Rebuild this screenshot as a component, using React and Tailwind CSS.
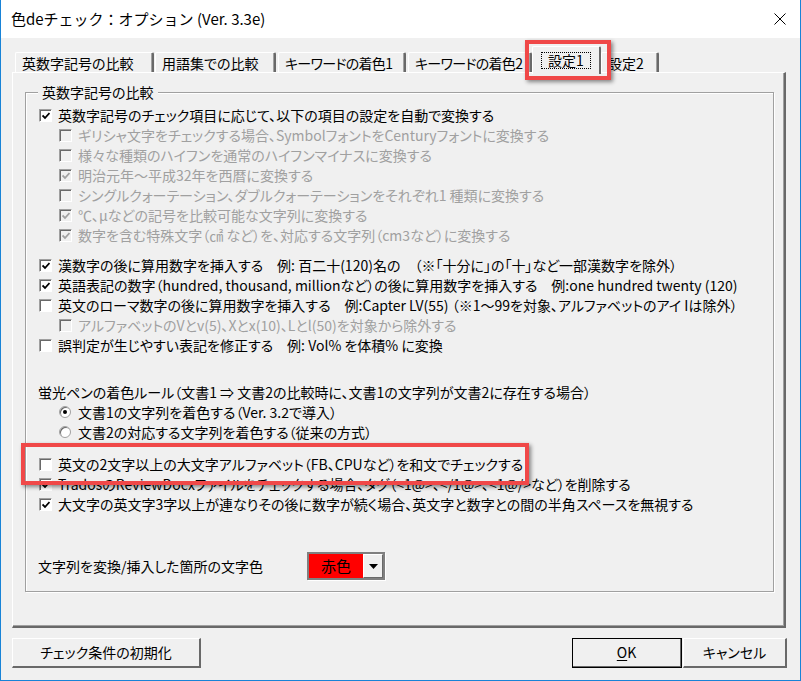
import React from 'react';

const FONT = "font-['Noto_Sans_CJK_JP','Noto_Sans',sans-serif] [font-feature-settings:'palt']";

// classic 3D checkbox
function Box({ checked, disabled }) {
  return (
    <span
      className={`relative inline-block h-[13px] w-[13px] shrink-0 border-t border-l border-[#a0a0a0] border-r-white border-b-white border-r border-b shadow-[inset_1px_1px_0_#696969] ${
        disabled ? 'bg-[#f0f0f0]' : 'bg-white'
      }`}
    >
      {checked && (
        <svg className="absolute left-[2px] top-[2px]" width="8" height="8" viewBox="0 0 8 8">
          <path d="M0.5 3.5 L3 6 L7.5 1" fill="none" stroke={disabled ? '#a0a0a0' : '#000'} strokeWidth="1.8" />
        </svg>
      )}
    </span>
  );
}

function Check({ checked, disabled, sub, children }) {
  return (
    <div className={`flex h-5 items-center ${sub ? 'pl-[33px]' : 'pl-[13px]'}`}>
      <Box checked={checked} disabled={disabled} />
      <span className={`ml-[6px] whitespace-nowrap ${disabled ? 'text-[#a0a0a0]' : 'text-black'}`}>{children}</span>
    </div>
  );
}

function Radio({ on, children }) {
  return (
    <div className="flex h-5 items-center pl-[33px]">
      <span className="relative inline-block h-[12px] w-[12px] shrink-0 rounded-full border border-[#a0a0a0] bg-white shadow-[inset_1px_1px_0_#696969]">
        {on && <span className="absolute left-[3px] top-[3px] h-[4px] w-[4px] rounded-full bg-black" />}
      </span>
      <span className="ml-[7px] whitespace-nowrap">{children}</span>
    </div>
  );
}

function Tab({ label, w, active, tight }) {
  if (active) {
    return (
      <div
        className={`relative z-10 -mb-[2px] flex h-[28px] items-start justify-center rounded-t-[2px] border-t border-l border-white border-r-2 border-r-[#696969] bg-[#f0f0f0] pt-[5px] ${w}`}
      >
        <span className="border border-dotted border-black px-[6px] leading-[15px]">{label}</span>
      </div>
    );
  }
  return (
    <div
      className={`flex h-[20px] items-center overflow-hidden rounded-t-[2px] border-t border-l border-white border-r-2 border-r-[#696969] pl-[6px] leading-none shadow-[inset_-1px_0_0_#a0a0a0] ${w}`}
    >
      <span className={`whitespace-nowrap ${tight ? 'tracking-[-0.7px]' : ''}`}>{label}</span>
    </div>
  );
}

function Button({ children, w, primary }) {
  return (
    <div
      className={`flex h-[30px] items-center justify-center ${w} ${
        primary ? 'outline outline-1 outline-black -outline-offset-1' : ''
      } border-t border-l border-white border-r-2 border-b-2 border-r-[#696969] border-b-[#696969] bg-[#f0f0f0] text-[14px]`}
    >
      {children}
    </div>
  );
}

export default function App() {
  return (
    <div className={`relative flex h-[681px] w-[801px] flex-col border-x border-b border-[#1883d7] bg-[#f0f0f0] text-[14px] text-black ${FONT}`}>
      {/* title bar */}
      <div className="flex h-[38px] items-center justify-between bg-white pl-[10px] pr-[14px]">
        <span className="text-[15px] [font-feature-settings:normal]">色deチェック：オプション (Ver. 3.3e)</span>
        <svg width="12" height="12" viewBox="0 0 12 12">
          <path d="M0.5 0.5 L11.5 11.5 M11.5 0.5 L0.5 11.5" stroke="#000" strokeWidth="1" />
        </svg>
      </div>

      <div className="flex flex-1 flex-col pl-[11px] pt-[8px]">
        {/* tabs */}
        <div className="flex h-[26px] items-end pl-[3px]">
          <Tab label="英数字記号の比較" w="w-[139px]" />
          <div className="w-[1px]" />
          <Tab label="用語集での比較" w="w-[121px]" />
          <div className="w-[2px]" />
          <Tab label="キーワードの着色1" w="w-[128px]" tight />
          <div className="w-[2px]" />
          <Tab label="キーワードの着色2" w="w-[124px]" tight />
          <Tab label="設定1" w="w-[69px]" active />
          <Tab label="設定2" w="w-[58px]" />
        </div>

        {/* tab page */}
        <div className="h-[556px] w-[774px] border-t border-l border-white border-r-2 border-b-2 border-r-[#696969] border-b-[#696969] pl-[12px] pt-[19px] shadow-[inset_-1px_-1px_0_#a0a0a0]">
          <div className="relative w-[749px] border border-[#a0a0a0] pb-[11px] pt-[12px] shadow-[inset_1px_1px_0_#fff,1px_1px_0_#fff]">
            <span className="absolute -top-[11px] left-[12px] bg-[#f0f0f0] px-[4px] leading-[20px]">英数字記号の比較</span>

            <Check checked>英数字記号のチェック項目に応じて、以下の項目の設定を自動で変換する</Check>
            <Check sub disabled>ギリシャ文字をチェックする場合、SymbolフォントをCenturyフォントに変換する</Check>
            <Check sub disabled>様々な種類のハイフンを通常のハイフンマイナスに変換する</Check>
            <Check sub disabled checked>明治元年～平成32年を西暦に変換する</Check>
            <Check sub disabled>シングルクォーテーション、ダブルクォーテーションをそれぞれ1 種類に変換する</Check>
            <Check sub disabled checked>℃、μなどの記号を比較可能な文字列に変換する</Check>
            <Check sub disabled checked>数字を含む特殊文字（㎠ など）を、対応する文字列（cm3など）に変換する</Check>

            <div className="mt-[10px]">
              <Check checked>漢数字の後に算用数字を挿入する　例: 百二十(120)名の　（※「十分に」の「十」など一部漢数字を除外）</Check>
              <Check checked>英語表記の数字（hundred, thousand, millionなど）の後に算用数字を挿入する　例:one hundred twenty (120)</Check>
              <Check>英文のローマ数字の後に算用数字を挿入する　例:Capter LV(55) （※1～99を対象、アルファベットのアイ Iは除外）</Check>
              <Check sub disabled>アルファベットのVとv(5)、Xとx(10)、Lとl(50)を対象から除外する</Check>
              <Check>誤判定が生じやすい表記を修正する　例: Vol% を体積% に変換</Check>
            </div>

            <div className="mt-[27px] flex h-5 items-center pl-[12px] whitespace-nowrap">
              蛍光ペンの着色ルール（文書1 ⇒ 文書2の比較時に、文書1の文字列が文書2に存在する場合）
            </div>
            <Radio on>文書1の文字列を着色する（Ver. 3.2で導入）</Radio>
            <Radio>文書2の対応する文字列を着色する（従来の方式）</Radio>

            <div className="mt-[12px]">
              <Check>英文の2文字以上の大文字アルファベット（FB、CPUなど）を和文でチェックする</Check>
              <Check checked>TradosのReviewDocxファイルをチェックする場合、タグ（&lt;1@&gt;、&lt;/1@&gt;、&lt;1@/&gt;など）を削除する</Check>
              <Check checked>大文字の英文字3字以上が連なりその後に数字が続く場合、英文字と数字との間の半角スペースを無視する</Check>
            </div>

            <div className="mt-[38px] flex h-[28px] items-center pl-[12px]">
              <span className="w-[269px] whitespace-nowrap">文字列を変換/挿入した箇所の文字色</span>
              <div className="flex h-[28px] w-[78px] border-2 border-[#808080] shadow-[1px_1px_0_#fff]">
                <div className="flex flex-1 items-center justify-center bg-[#ff0000] text-[15px]">赤色</div>
                <div className="flex w-[20px] items-center justify-center border-t border-l border-white border-r border-b border-r-[#696969] border-b-[#696969] bg-[#f0f0f0]">
                  <svg width="9" height="5" viewBox="0 0 9 5">
                    <path d="M0 0 L9 0 L4.5 5 Z" fill="#000" />
                  </svg>
                </div>
              </div>
            </div>
          </div>
        </div>

        {/* buttons */}
        <div className="mt-[10px] flex pr-[13px]">
          <Button w="w-[189px]">チェック条件の初期化</Button>
          <div className="flex-1" />
          <Button w="w-[110px]" primary>
            <span className="underline underline-offset-2">O</span>K
          </Button>
          <div className="w-[1px]" />
          <Button w="w-[104px]">キャンセル</Button>
        </div>
      </div>

      {/* red highlight boxes */}
      <div className="absolute left-[524px] top-[40px] h-[40px] w-[86px] border-4 border-[#f04848] shadow-[2px_2px_4px_rgba(0,0,0,0.45)]" />
      <div className="absolute left-[20px] top-[443px] h-[42px] w-[508px] border-4 border-[#f04848] shadow-[2px_2px_4px_rgba(0,0,0,0.45)]" />
    </div>
  );
}
